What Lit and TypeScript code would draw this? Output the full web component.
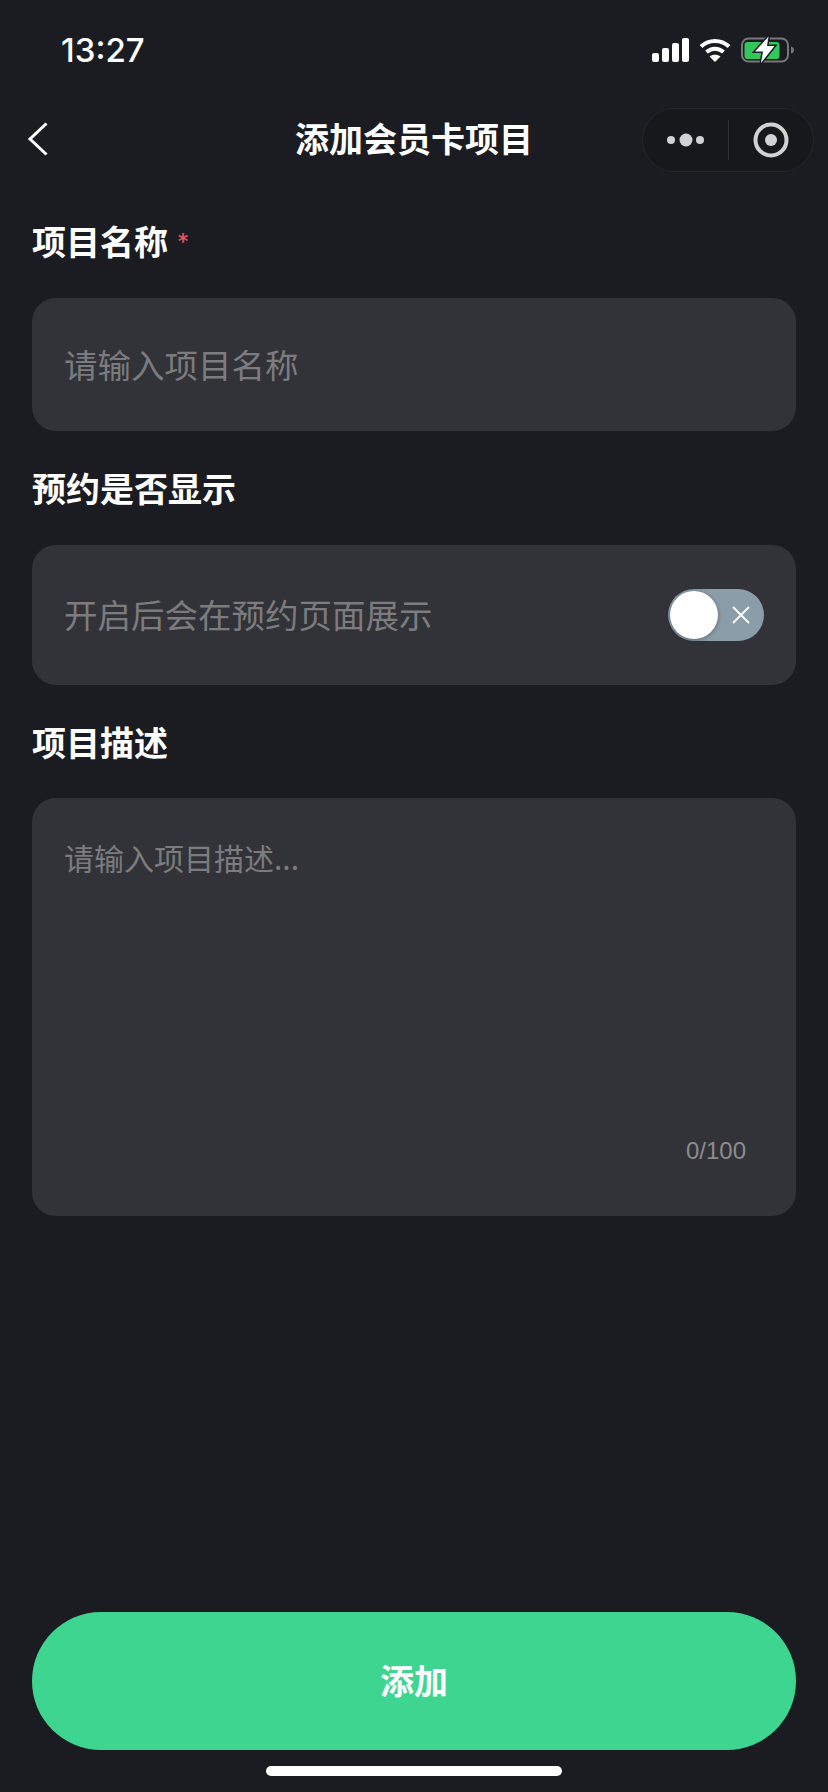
import { LitElement, html, css } from "lit";
import { customElement } from "lit/decorators.js";

@customElement("app-root")
export class AppRoot extends LitElement {
  static styles = css`
    :host { display: block; width: 828px; height: 1792px; background: #1b1c21; color: #fff; font-family: "Noto Sans CJK SC", sans-serif; overflow: hidden; }
    .page { display: flex; flex-direction: column; height: 1792px; }
    .status { height: 96px; flex: none; display: flex; align-items: center; justify-content: space-between; padding: 3px 34px 0 61px; box-sizing: border-box; }
    .time { font: 500 33px "Inter", sans-serif; line-height: 40px; }
    .status-icons { display: flex; align-items: center; gap: 10px; }
    svg { display: block; }
    .nav { height: 88px; flex: none; position: relative; display: flex; align-items: center; justify-content: center; }
    .back { position: absolute; left: 26px; top: 25px; }
    .title { font-size: 34px; font-weight: 700; line-height: 48px; margin-top: -4px; }
    .capsule { position: absolute; left: 642px; top: 12px; width: 172px; height: 64px; border-radius: 32px; background: #17181c; border: 1px solid #25262b; box-sizing: border-box; display: flex; align-items: center; }
    .form { flex: 1; padding: 34px 32px 0; display: flex; flex-direction: column; }
    .label { font-size: 34px; font-weight: 700; height: 48px; line-height: 46px; display: flex; flex: none; }
    .star { color: #f0545f; font: 400 24px "Inter", sans-serif; margin: 5px 0 0 9px; line-height: 40px; }
    .box { background: #323338; border-radius: 24px; color: #7c7c7f; flex: none; font-size: 33.500px; box-sizing: border-box; }
    .input { height: 133px; margin: 32px 0 34px; display: flex; align-items: center; padding: 0 32px 2px; }
    .switch-row { height: 140px; margin: 32px 0 34px; display: flex; align-items: center; justify-content: space-between; padding: 0 32px; }
    .hint { margin-bottom: 3px; }
    .toggle { width: 96px; height: 52px; border-radius: 26px; background: #8b9da8; position: relative; display: flex; align-items: center; justify-content: flex-end; padding-right: 14px; box-sizing: border-box; }
    .knob { position: absolute; left: 2px; top: 2px; width: 48px; height: 48px; border-radius: 50%; background: #fff; box-shadow: 0 1px 4px rgba(0,0,0,.35); }
    .area { height: 418px; margin-top: 31px; padding: 35px 32px 0; position: relative; font-size: 30px; line-height: 48px; }
    .count { position: absolute; right: 50px; bottom: 50px; font: 400 24px "Liberation Sans", sans-serif; line-height: 30px; color: #8b8c8f; }
    .spacer { flex: 1; }
    .btn { height: 138px; flex: none; border-radius: 69px; background: #3dd590; display: flex; align-items: center; justify-content: center; font-size: 34px; font-weight: 700; padding-bottom: 3px; box-sizing: border-box; }
    .home { width: 296px; height: 10px; border-radius: 5px; background: #fff; align-self: center; margin: 16px 0; flex: none; }
  `;

  render() {
    return html`
      <div class="page">
        <div class="status">
          <span class="time">13:27</span>
          <div class="status-icons">
            <svg width="37" height="24" viewBox="0 0 37 24" fill="#fff">
              <rect x="0" y="15" width="7" height="9" rx="2"/>
              <rect x="10" y="10" width="7" height="14" rx="2"/>
              <rect x="20" y="5" width="7" height="19" rx="2"/>
              <rect x="30" y="0" width="7" height="24" rx="2"/>
            </svg>
            <svg width="32" height="24" viewBox="0 0 32 24" fill="none" stroke="#fff" stroke-width="4">
              <path d="M2 8.500C10 1 22 1 30 8.500"/>
              <path d="M7.500 14C12.500 9.500 19.500 9.500 24.500 14"/>
              <path d="M16 24L10.500 18.500C13.500 16 18.500 16 21.500 18.500Z" fill="#fff" stroke="none"/>
            </svg>
            <svg width="53" height="28" viewBox="0 0 53 28">
              <rect x="1" y="2.500" width="46" height="23" rx="6.500" fill="none" stroke="#77787c" stroke-width="2"/>
              <rect x="3.500" y="6" width="35" height="17" rx="3" fill="#32c75a"/>
              <path d="M50 10.500C52 11 53 12.500 53 14S52 17 50 17.500Z" fill="#77787c"/>
              <path d="M27.500 0.500L14 15.500H22L20 27L33.500 10H26Z" fill="#fff" stroke="#1b1c21" stroke-width="3" paint-order="stroke"/>
            </svg>
          </div>
        </div>
        <div class="nav">
          <svg class="back" width="24" height="36" viewBox="0 0 24 36" fill="none" stroke="#fff" stroke-width="3">
            <path d="M20.500 2.500L4 18L20.500 33.500"/>
          </svg>
          <span class="title">添加会员卡项目</span>
          <div class="capsule">
            <svg width="170" height="62" viewBox="0 0 170 62">
              <g fill="#d2d2d2">
                <circle cx="28" cy="31" r="4"/>
                <circle cx="43" cy="31" r="6.500"/>
                <circle cx="57" cy="31" r="4"/>
                <circle cx="128" cy="31" r="6"/>
              </g>
              <rect x="85" y="11" width="1" height="40" fill="#2e2f34"/>
              <circle cx="128" cy="31" r="15.500" fill="none" stroke="#d2d2d2" stroke-width="4"/>
            </svg>
          </div>
        </div>
        <div class="form">
          <div class="label">项目名称<span class="star">*</span></div>
          <div class="box input">请输入项目名称</div>
          <div class="label">预约是否显示</div>
          <div class="box switch-row">
            <span class="hint">开启后会在预约页面展示</span>
            <div class="toggle">
              <div class="knob"></div>
              <svg width="18" height="18" viewBox="0 0 18 18" stroke="#fff" stroke-width="1.800">
                <path d="M1 1L17 17M17 1L1 17"/>
              </svg>
            </div>
          </div>
          <div class="label">项目描述</div>
          <div class="box area">请输入项目描述...<span class="count">0/100</span></div>
          <div class="spacer"></div>
          <div class="btn">添加</div>
        </div>
        <div class="home"></div>
      </div>
    `;
  }
}
